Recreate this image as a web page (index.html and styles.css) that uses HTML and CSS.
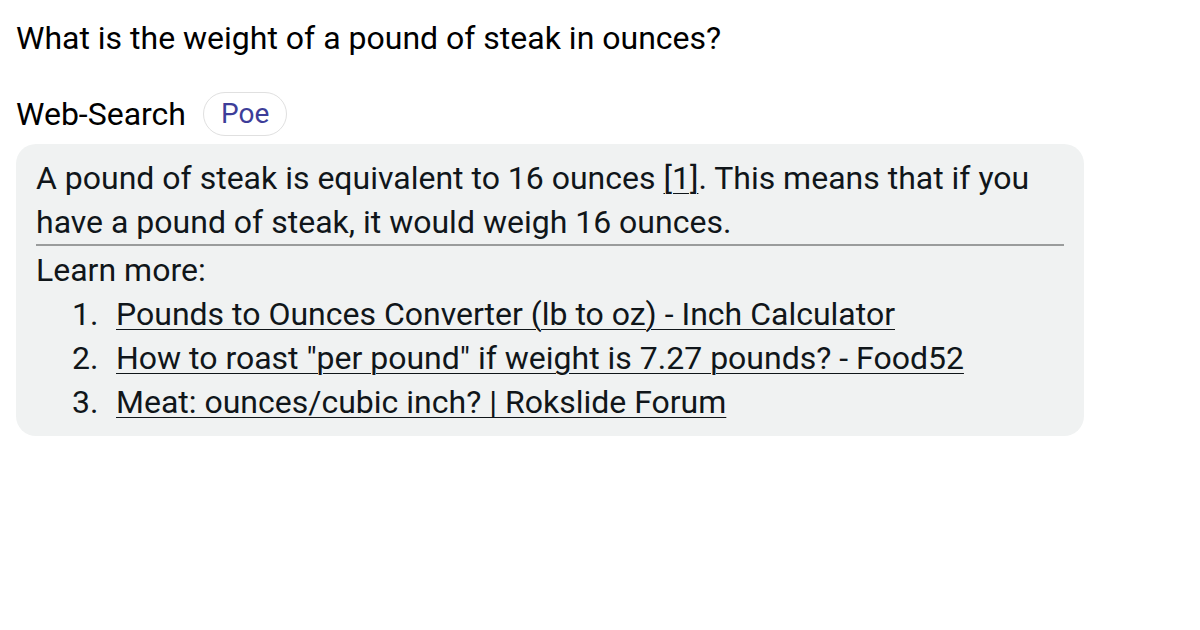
FILE: index.html
```html
<!DOCTYPE html>
<html>
<head>
<meta charset="utf-8">
<link rel="stylesheet" href="styles.css">
</head>
<body>
<div class="page">
  <div class="question">What is the weight of a pound of steak in ounces?</div>
  <div class="header">
    <span class="bot-name">Web-Search</span>
    <span class="chip">Poe</span>
  </div>
  <div class="bubble">
    <p class="answer">A pound of steak is equivalent to 16 ounces <a href="#" class="ref">[1]</a>. This means that if you have a pound of steak, it would weigh 16 ounces.</p>
    <hr class="divider">
    <p class="learn">Learn more:</p>
    <ol class="sources">
      <li><a href="#">Pounds to Ounces Converter (lb to oz) - Inch Calculator</a></li>
      <li><a href="#">How to roast "per pound" if weight is 7.27 pounds? - Food52</a></li>
      <li><a href="#">Meat: ounces/cubic inch? | Rokslide Forum</a></li>
    </ol>
  </div>
</div>
</body>
</html>
```
FILE: styles.css
```css
html, body {
  margin: 0;
  padding: 0;
  background: #ffffff;
}
body {
  font-family: Roboto, "Noto Sans", sans-serif;
  font-size: 32px;
  line-height: 44px;
  color: #0b0d0f;
}
.page {
  padding: 16px;
  width: 1068px;
}
.question {
  color: #000;
}
.header {
  display: flex;
  align-items: center;
  gap: 17px;
  margin-top: 32px;
  margin-bottom: 8px;
}
.bot-name {
  color: #000;
}
.chip {
  display: inline-flex;
  align-items: center;
  height: 42px;
  padding: 0 17px;
  border: 1px solid #e0e0e0;
  border-radius: 22px;
  color: #3d3d99;
  font-size: 28px;
}
.bubble {
  background: #f0f2f2;
  border-radius: 20px;
  padding: 12px 20px;
  color: #10161a;
}
.bubble p {
  margin: 0;
}
.bubble a {
  color: inherit;
  text-decoration: underline;
  text-decoration-thickness: 1px;
  text-underline-offset: 4px;
}
.divider {
  border: 0;
  border-top: 2px solid #9a9c9c;
  margin: 0 0 2px 0;
}
.sources {
  margin: 0;
  padding-left: 36px;
  list-style: none;
  counter-reset: src;
}
.sources li {
  display: flex;
  counter-increment: src;
}
.sources li::before {
  content: counter(src) ".";
  min-width: 44px;
}
```
